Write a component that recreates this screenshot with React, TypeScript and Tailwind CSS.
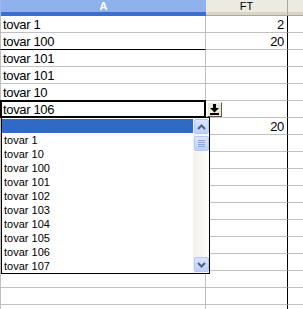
import React from "react";

const cellFont = { fontFamily: '"Liberation Sans", Arial, sans-serif' };

type Row = { a?: string; ft?: string; aBottomBlack?: boolean };

const rows: Row[] = [
  { a: "tovar 1", ft: "2" },
  { a: "tovar 100", ft: "20", aBottomBlack: true },
  { a: "tovar 101" },
  { a: "tovar 101" },
  { a: "tovar 10" },
  { a: "tovar 106" },
  { ft: "20" },
  {}, {}, {}, {}, {}, {}, {}, {}, {}, {}, {},
];

const items = [
  "",
  "tovar 1",
  "tovar 10",
  "tovar 100",
  "tovar 101",
  "tovar 102",
  "tovar 103",
  "tovar 104",
  "tovar 105",
  "tovar 106",
  "tovar 107",
];

function ScrollBtn({ dir }: { dir: "up" | "down" }) {
  return (
    <div className="w-[15px] h-[15px] rounded-[2px] border border-[#b4c8f6] bg-gradient-to-b from-[#dce6fd] to-[#bccffb] flex items-center justify-center">
      <svg width="9" height="6" viewBox="0 0 9 6">
        {dir === "up" ? (
          <path d="M1 5 L4.5 1.5 L8 5" fill="none" stroke="#4d6185" strokeWidth="2" />
        ) : (
          <path d="M1 1 L4.5 4.5 L8 1" fill="none" stroke="#4d6185" strokeWidth="2" />
        )}
      </svg>
    </div>
  );
}

function DropList() {
  return (
    <div
      className="absolute left-px top-[calc(100%-1px)] w-[209px] h-[157px] border border-black bg-white flex z-10"
      style={cellFont}
    >
      <div className="flex-1 flex flex-col pt-px">
        {items.map((t, i) => (
          <div
            key={i}
            className={`h-[14px] leading-[14px] text-[11px] pl-[2px] ${
              i === 0 ? "bg-[#316ac5] text-white" : "text-black"
            }`}
          >
            {t}
          </div>
        ))}
      </div>
      <div className="w-[16px] flex flex-col items-center justify-between py-px bg-gradient-to-r from-[#f3f1ec] to-[#fefefb]">
        <div className="flex flex-col gap-[2px]">
          <ScrollBtn dir="up" />
          <div className="w-[15px] h-[15px] rounded-[2px] border border-[#b4c8f6] bg-gradient-to-b from-[#dce6fd] to-[#bccffb] flex flex-col items-center justify-center gap-px">
            <div className="w-[7px] h-px bg-[#8ea4d8]" />
            <div className="w-[7px] h-px bg-[#8ea4d8]" />
            <div className="w-[7px] h-px bg-[#8ea4d8]" />
            <div className="w-[7px] h-px bg-[#8ea4d8]" />
          </div>
        </div>
        <ScrollBtn dir="down" />
      </div>
    </div>
  );
}

function DropButton() {
  return (
    <div className="absolute left-[207px] top-px w-[15px] h-[15px] bg-[#ece9d8] border-t border-l border-t-white border-l-white border-r border-b border-r-[#555] border-b-[#555] flex items-center justify-center z-10">
      <svg width="9" height="11" viewBox="0 0 9 11">
        <rect x="3" y="0" width="3" height="4" fill="#000" />
        <path d="M0 4 H9 L4.5 8.5 Z" fill="#000" />
        <rect x="0" y="9" width="9" height="2" fill="#000" />
      </svg>
    </div>
  );
}

export default function App() {
  return (
    <div className="w-[303px] h-[309px] overflow-hidden bg-white" style={cellFont}>
      {/* header */}
      <div className="flex h-[16px]">
        <div className="w-[206px] h-full flex flex-col border-l border-[#9db9eb]">
          <div className="flex-1 bg-[#8fb2ec] flex items-center justify-center text-[11px] font-bold text-white leading-none">
            A
          </div>
          <div className="h-[4px] bg-[#3b6fcf]" />
        </div>
        <div className="w-[82px] h-full flex flex-col border-r border-[#aca899]">
          <div className="flex-1 bg-[#ecebe2] flex items-center justify-center text-[11px] text-black leading-none pt-px">
            FT
          </div>
          <div className="h-[3px] bg-[#d8d4c6]" />
          <div className="h-px bg-[#aca899]" />
        </div>
        <div className="flex-1 h-full flex flex-col">
          <div className="flex-1 bg-[#ecebe2]" />
          <div className="h-[3px] bg-[#d8d4c6]" />
          <div className="h-px bg-[#aca899]" />
        </div>
      </div>
      {/* rows */}
      {rows.map((r, i) => (
        <div key={i} className="flex h-[17px] relative">
          <div
            className={`w-[206px] h-full border-l border-r border-b border-l-[#c0c0c0] border-r-[#c0c0c0] ${
              r.aBottomBlack ? "border-b-black" : "border-b-[#c0c0c0]"
            } flex items-end text-[13px] tracking-[-0.35px] leading-[15px] pl-[2px] text-black`}
          >
            {r.a}
          </div>
          <div className="w-[82px] h-full border-r border-r-black border-b border-b-[#c0c0c0] flex items-end justify-end text-[13px] tracking-[-0.35px] leading-[15px] pr-[3px] text-black">
            {r.ft}
          </div>
          <div className="flex-1 h-full border-b border-b-[#c0c0c0]" />
          {i === 5 && (
            <>
              <div className="absolute left-0 top-[-1px] w-[206px] h-[18px] border-2 border-black pointer-events-none" />
              <DropButton />
              <DropList />
            </>
          )}
        </div>
      ))}
    </div>
  );
}
